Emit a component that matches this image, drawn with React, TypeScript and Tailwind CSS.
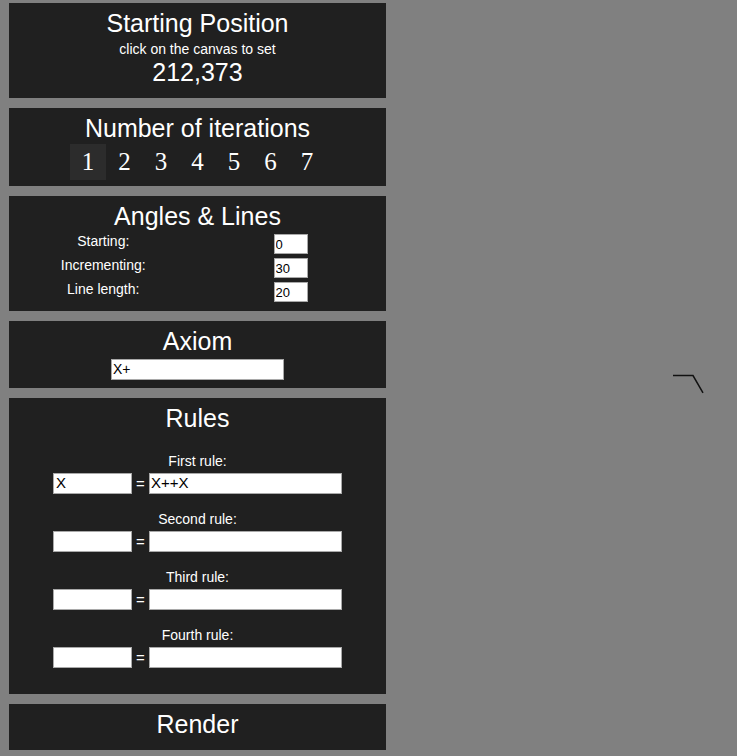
import React from "react";

const sans = { fontFamily: '"Liberation Sans", Arial, sans-serif' };

function Title({ children }: { children: React.ReactNode }) {
  return <div className="text-[25px] leading-[28px] text-white text-center">{children}</div>;
}

function Panel({ className, children }: { className: string; children: React.ReactNode }) {
  return <div className={`bg-[#202020] w-[377px] ${className}`}>{children}</div>;
}

function RuleBlock({ label, left, right, first }: { label: string; left: string; right: string; first?: boolean }) {
  return (
    <div className={first ? "mt-[21px]" : "mt-[17px]"}>
      <div className="text-[14px] leading-[16px] text-white text-center">{label}</div>
      <div className="mt-[4px] flex items-center justify-center">
        <input
          readOnly
          value={left}
          className="w-[79px] h-[21px] bg-white border border-[#a9a9a9] text-black text-[15px] px-[2px] outline-none"
          style={sans}
        />
        <span className="mx-[4px] text-white text-[15px] leading-[16px]">=</span>
        <input
          readOnly
          value={right}
          className="w-[193px] h-[21px] bg-white border border-[#a9a9a9] text-black text-[15px] px-[1px] outline-none"
          style={sans}
        />
      </div>
    </div>
  );
}

export default function App() {
  const nums = [1, 2, 3, 4, 5, 6, 7];
  const rows = [
    { label: "Starting:", v: "0" },
    { label: "Incrementing:", v: "30" },
    { label: "Line length:", v: "20" },
  ];
  return (
    <div className="flex w-full h-[756px] bg-[#808080] overflow-hidden" style={sans}>
      <div className="flex flex-col gap-[10px] pl-[9px] pt-[3px] w-[386px] shrink-0">
        <Panel className="h-[95px] pt-[6px]">
          <Title>Starting Position</Title>
          <div className="mt-[4px] text-[14px] leading-[16px] text-white text-center">click on the canvas to set</div>
          <div className="mt-[1px] text-[25px] leading-[28px] text-white text-center">212,373</div>
        </Panel>
        <Panel className="h-[78px] pt-[6px]">
          <Title>Number of iterations</Title>
          <div className="mt-[2px] flex justify-center">
            {nums.map((n) => (
              <div
                key={n}
                className={`w-[36.5px] h-[36px] text-[25px] leading-[36px] text-white text-center ${n === 1 ? "bg-[#2c2c2c]" : ""}`}
                style={{ fontFamily: '"Liberation Serif", "Times New Roman", serif' }}
              >
                {n}
              </div>
            ))}
          </div>
        </Panel>
        <Panel className="h-[115px] pt-[6px]">
          <Title>Angles &amp; Lines</Title>
          <div className="mt-[2px] flex flex-col">
            {rows.map((r) => (
              <div key={r.label} className="grid grid-cols-2 h-[24px]">
                <div className="text-[14px] leading-[18px] text-white text-center self-start">{r.label}</div>
                <div className="flex items-center justify-start pl-[76px]">
                  <input
                    readOnly
                    value={r.v}
                    className="w-[34px] h-[20px] bg-white border border-[#a9a9a9] text-black text-[13px] px-[1px] outline-none"
                    style={sans}
                  />
                </div>
              </div>
            ))}
          </div>
        </Panel>
        <Panel className="h-[67px] pt-[6px]">
          <Title>Axiom</Title>
          <div className="mt-[4px] flex justify-center">
            <input
              readOnly
              value="X+"
              className="w-[173px] h-[21px] bg-white border border-[#a9a9a9] text-black text-[14px] px-[1px] outline-none"
              style={sans}
            />
          </div>
        </Panel>
        <Panel className="h-[296px] pt-[6px]">
          <Title>Rules</Title>
          <RuleBlock first label="First rule:" left="X" right="X++X" />
          <RuleBlock label="Second rule:" left="" right="" />
          <RuleBlock label="Third rule:" left="" right="" />
          <RuleBlock label="Fourth rule:" left="" right="" />
        </Panel>
        <Panel className="h-[46px] pt-[6px]">
          <Title>Render</Title>
        </Panel>
      </div>
      <div className="flex-1 h-full">
        <svg width="351" height="756" className="block">
          <polyline
            points="287,375.5 307,375.5 317,392.8"
            fill="none"
            stroke="#111111"
            strokeWidth="1.5"
          />
        </svg>
      </div>
    </div>
  );
}
